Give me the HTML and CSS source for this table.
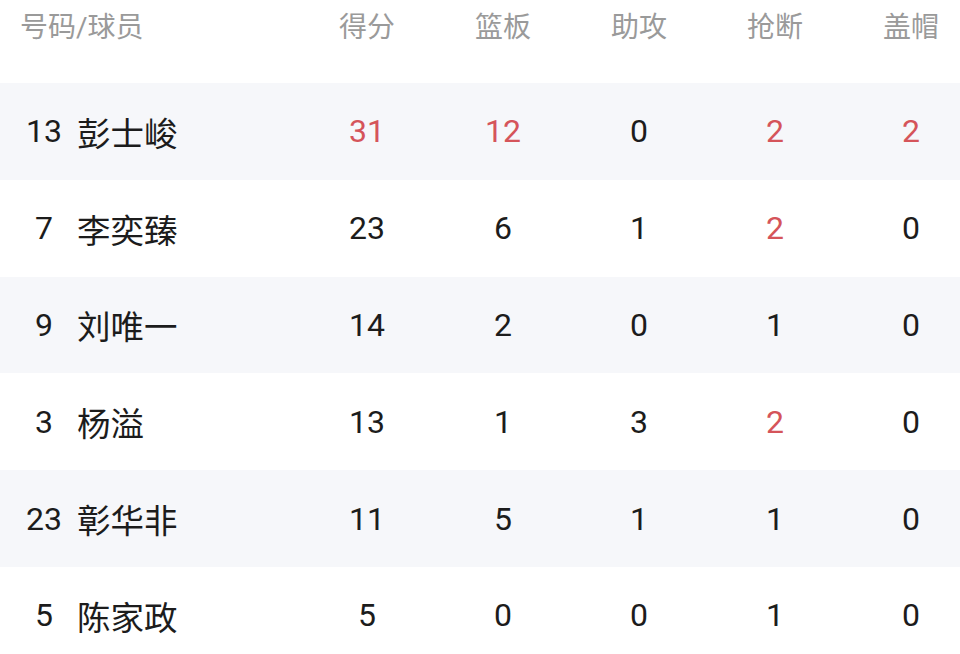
FILE: index.html
```html
<!DOCTYPE html>
<html>

<head>
    <meta charset="utf-8" />
    <title>球员数据</title>
    <link rel="stylesheet" href="styles.css">
</head>

<body>
    <div class="board">
        <div class="row head">
            <div class="player">号码/球员</div>
            <div class="cell">得分</div>
            <div class="cell">篮板</div>
            <div class="cell">助攻</div>
            <div class="cell">抢断</div>
            <div class="cell">盖帽</div>
        </div>

        <div class="row odd">
            <div class="player"><span class="num">13</span><span class="name">彭士峻</span></div>
            <div class="cell hot">31</div>
            <div class="cell hot">12</div>
            <div class="cell">0</div>
            <div class="cell hot">2</div>
            <div class="cell hot">2</div>
        </div>
        <div class="row">
            <div class="player"><span class="num">7</span><span class="name">李奕臻</span></div>
            <div class="cell">23</div>
            <div class="cell">6</div>
            <div class="cell">1</div>
            <div class="cell hot">2</div>
            <div class="cell">0</div>
        </div>
        <div class="row odd">
            <div class="player"><span class="num">9</span><span class="name">刘唯一</span></div>
            <div class="cell">14</div>
            <div class="cell">2</div>
            <div class="cell">0</div>
            <div class="cell">1</div>
            <div class="cell">0</div>
        </div>
        <div class="row">
            <div class="player"><span class="num">3</span><span class="name">杨溢</span></div>
            <div class="cell">13</div>
            <div class="cell">1</div>
            <div class="cell">3</div>
            <div class="cell hot">2</div>
            <div class="cell">0</div>
        </div>
        <div class="row odd">
            <div class="player"><span class="num">23</span><span class="name">彰华非</span></div>
            <div class="cell">11</div>
            <div class="cell">5</div>
            <div class="cell">1</div>
            <div class="cell">1</div>
            <div class="cell">0</div>
        </div>
        <div class="row">
            <div class="player"><span class="num">5</span><span class="name">陈家政</span></div>
            <div class="cell">5</div>
            <div class="cell">0</div>
            <div class="cell">0</div>
            <div class="cell">1</div>
            <div class="cell">0</div>
        </div>
    </div>
</body>

</html>
```

FILE: styles.css
```css
html,
body {
    margin: 0;
    padding: 0;
    background: #ffffff;
    overflow: hidden;
}

body {
    font-family: Roboto, "Noto Sans CJK SC", sans-serif;
    color: #1c1c1c;
}

.board {
    width: 979px;
}

.row {
    display: grid;
    grid-template-columns: 299px repeat(5, 136px);
    align-items: center;
    height: 96.8px;
    font-size: 32px;
}

.row.odd {
    background: #f6f7fa;
}

.row.head {
    height: 83px;
    align-items: start;
    font-size: 28px;
    color: #9a9a9a;
}

.head .player {
    padding-left: 20px;
    padding-top: 5px;
}

.head .cell {
    padding-top: 5px;
}

.player {
    display: flex;
    align-items: center;
}

.num {
    width: 50px;
    margin-left: 19px;
    text-align: center;
}

.name {
    margin-left: 8px;
    font-size: 33.5px;
}

.cell {
    text-align: center;
}

.hot {
    color: #d5545a;
}
```
